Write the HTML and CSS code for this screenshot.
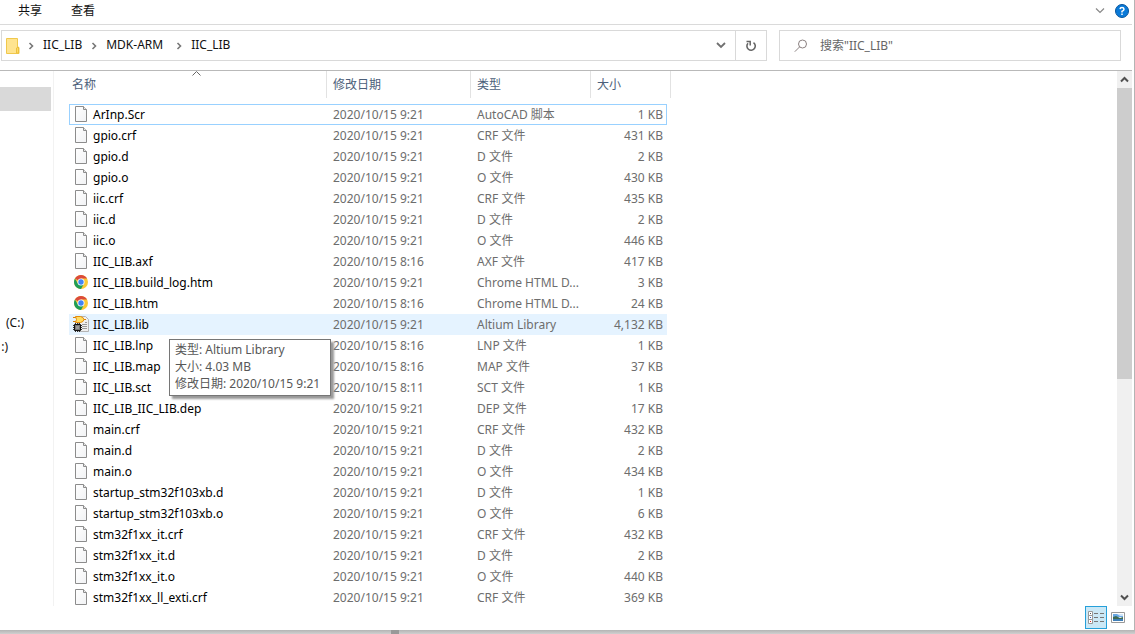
FILE: index.html
```html
<!DOCTYPE html>
<html lang="zh-CN">
<head>
<meta charset="utf-8">
<title>IIC_LIB</title>
<link rel="stylesheet" href="styles.css">
</head>
<body>
<svg class="defs" aria-hidden="true">
  <defs>
    <linearGradient id="paper" x1="0" y1="0" x2="1" y2="1"><stop offset="0" stop-color="#fff"/><stop offset="1" stop-color="#f1f2f4"/></linearGradient>
    <symbol id="file" viewBox="0 0 16 16">
      <path d="M2.500.5h8l3 3v12h-11z" fill="url(#paper)" stroke="#8c8c8c"/>
      <path d="M10.500.5v3h3" fill="#e8e8e8" stroke="#8c8c8c"/>
    </symbol>
    <symbol id="chrome" viewBox="0 0 16 16">
      <circle cx="8" cy="8" r="7" fill="#fbc934"/>
      <path d="M8 8 1.940 4.500A7 7 0 0 1 14.060 4.500H8z" fill="#db4a3c"/>
      <path d="M1.940 4.500A7 7 0 0 0 8 15l3-5.200L8 8 5 9.800z" fill="#1f9d58"/>
      <circle cx="8" cy="8" r="3.500" fill="#fff"/>
      <circle cx="8" cy="8" r="2.700" fill="#4285f4"/>
    </symbol>
    <symbol id="altium" viewBox="0 0 16 16">
      <path d="M5.500.5h7l3 3v12h-10z" fill="#f0f0f0" stroke="#b4b4b4"/>
      <path d="M9 8.500h5M9 10.500h5M9 12.500h5M12 6.500h2" stroke="#999"/>
      <path d="M0 1.500h3M0 5.500h3M10 3.500h3" stroke="#d98207"/>
      <path d="M2.500.5h5q3 .5 3.500 3-.5 2.500-3.500 3h-5l1-3z" fill="#ffdc62" stroke="#e58b0a"/>
      <path d="M2.500 7v9M4.500 7v9M6.500 7v9M0 9.500h9M0 11.500h9M0 13.500h9" stroke="#333"/>
      <path d="M1.500 8.500h6v6h-6z" fill="#777" stroke="#111"/>
      <path d="M3 10h3v3H3z" fill="#999"/>
    </symbol>
    <symbol id="crumb" viewBox="0 0 6 8"><path d="M1.500 1l3 3-3 3" fill="none" stroke="#777" stroke-width="1.600"/></symbol>
  </defs>
</svg>
<div class="window">
  <header class="ribbon">
    <nav class="tabs"><button>共享</button><button>查看</button></nav>
    <button class="icon-btn" aria-label="展开功能区"><svg width="10" height="6" viewBox="0 0 10 6"><path d="M1 .5l4 4 4-4" fill="none" stroke="#888" stroke-width="1.200"/></svg></button>
    <button class="icon-btn help" aria-label="帮助"><svg width="14" height="14" viewBox="0 0 14 14"><circle cx="7" cy="7" r="6.500" fill="#0a7ad8" stroke="#07549c"/><path d="M5 5.200Q5.200 3.500 7 3.500T9 5.200Q9 6.200 7 7.300V8.500M7 9.500v1.500" fill="none" stroke="#fff" stroke-width="1.500"/></svg></button>
  </header>
  <div class="toolbar">
    <div class="address">
      <svg class="folder" width="14" height="16" viewBox="0 0 14 16"><path d="M.5.5h11v9h1.500v6H.5z" fill="#ffe48f" stroke="#f0c84c"/><path d="M10.500 15v-5l2-1v6z" fill="#ffda68" stroke="#ecc03c"/></svg>
      <svg class="sep" width="6" height="8"><use href="#crumb"/></svg><button>IIC_LIB</button>
      <svg class="sep" width="6" height="8"><use href="#crumb"/></svg><button class="wide">MDK-ARM</button>
      <svg class="sep" width="6" height="8"><use href="#crumb"/></svg><button>IIC_LIB</button>
      <button class="history" aria-label="以前的位置"><svg width="10" height="7" viewBox="0 0 10 7"><path d="M1 1l4 4 4-4" fill="none" stroke="#707070" stroke-width="1.800"/></svg></button>
      <button class="refresh" aria-label="刷新"><svg width="12" height="12" viewBox="0 0 12 12"><path d="M8.500 2.600A4.200 4.200 0 1 1 3 3.200" fill="none" stroke="#666" stroke-width="1.600"/><path d="M1.500 1.500H5.200V5.500" fill="none" stroke="#666" stroke-width="1.500"/></svg></button>
    </div>
    <label class="search">
      <svg width="14" height="14" viewBox="0 0 14 14"><circle cx="8.500" cy="5" r="4" fill="none" stroke="#8a8080"/><path d="M5.700 7.800.8 12.700" stroke="#8a8080"/></svg>
      <input type="text" placeholder='搜索"IIC_LIB"' aria-label="搜索">
    </label>
  </div>
  <div class="content">
    <aside class="tree"><div class="selected"></div><div class="drive drive-c">(C:)</div><div class="drive drive-d">:)</div></aside>
    <main class="files">
      <table>
        <colgroup><col class="c-name"><col class="c-date"><col class="c-type"><col class="c-size"><col class="c-end"></colgroup>
        <thead><tr>
          <th><div class="head first">名称<svg class="sort" width="9" height="5" viewBox="0 0 9 5"><path d="M.5 4.500l4-4 4 4" fill="none" stroke="#666"/></svg></div></th>
          <th><div class="head">修改日期</div></th><th><div class="head">类型</div></th><th colspan="2"><div class="head last">大小</div></th>
        </tr></thead>
        <tbody>
          <tr class="focused"><td><svg><use href="#file"/></svg>ArInp.Scr</td><td>2020/10/15 9:21</td><td>AutoCAD 脚本</td><td>1 KB</td></tr>
          <tr><td><svg><use href="#file"/></svg>gpio.crf</td><td>2020/10/15 9:21</td><td>CRF 文件</td><td>431 KB</td></tr>
          <tr><td><svg><use href="#file"/></svg>gpio.d</td><td>2020/10/15 9:21</td><td>D 文件</td><td>2 KB</td></tr>
          <tr><td><svg><use href="#file"/></svg>gpio.o</td><td>2020/10/15 9:21</td><td>O 文件</td><td>430 KB</td></tr>
          <tr><td><svg><use href="#file"/></svg>iic.crf</td><td>2020/10/15 9:21</td><td>CRF 文件</td><td>435 KB</td></tr>
          <tr><td><svg><use href="#file"/></svg>iic.d</td><td>2020/10/15 9:21</td><td>D 文件</td><td>2 KB</td></tr>
          <tr><td><svg><use href="#file"/></svg>iic.o</td><td>2020/10/15 9:21</td><td>O 文件</td><td>446 KB</td></tr>
          <tr><td><svg><use href="#file"/></svg>IIC_LIB.axf</td><td>2020/10/15 8:16</td><td>AXF 文件</td><td>417 KB</td></tr>
          <tr><td><svg><use href="#chrome"/></svg>IIC_LIB.build_log.htm</td><td>2020/10/15 9:21</td><td>Chrome HTML D...</td><td>3 KB</td></tr>
          <tr><td><svg><use href="#chrome"/></svg>IIC_LIB.htm</td><td>2020/10/15 8:16</td><td>Chrome HTML D...</td><td>24 KB</td></tr>
          <tr class="hovered"><td><svg><use href="#altium"/></svg>IIC_LIB.lib<div class="tooltip" role="tooltip">类型: Altium Library<br>大小: 4.03 MB<br>修改日期: 2020/10/15 9:21</div></td><td>2020/10/15 9:21</td><td>Altium Library</td><td>4,132 KB</td></tr>
          <tr><td><svg><use href="#file"/></svg>IIC_LIB.lnp</td><td>2020/10/15 8:16</td><td>LNP 文件</td><td>1 KB</td></tr>
          <tr><td><svg><use href="#file"/></svg>IIC_LIB.map</td><td>2020/10/15 8:16</td><td>MAP 文件</td><td>37 KB</td></tr>
          <tr><td><svg><use href="#file"/></svg>IIC_LIB.sct</td><td>2020/10/15 8:11</td><td>SCT 文件</td><td>1 KB</td></tr>
          <tr><td><svg><use href="#file"/></svg>IIC_LIB_IIC_LIB.dep</td><td>2020/10/15 9:21</td><td>DEP 文件</td><td>17 KB</td></tr>
          <tr><td><svg><use href="#file"/></svg>main.crf</td><td>2020/10/15 9:21</td><td>CRF 文件</td><td>432 KB</td></tr>
          <tr><td><svg><use href="#file"/></svg>main.d</td><td>2020/10/15 9:21</td><td>D 文件</td><td>2 KB</td></tr>
          <tr><td><svg><use href="#file"/></svg>main.o</td><td>2020/10/15 9:21</td><td>O 文件</td><td>434 KB</td></tr>
          <tr><td><svg><use href="#file"/></svg>startup_stm32f103xb.d</td><td>2020/10/15 9:21</td><td>D 文件</td><td>1 KB</td></tr>
          <tr><td><svg><use href="#file"/></svg>startup_stm32f103xb.o</td><td>2020/10/15 9:21</td><td>O 文件</td><td>6 KB</td></tr>
          <tr><td><svg><use href="#file"/></svg>stm32f1xx_it.crf</td><td>2020/10/15 9:21</td><td>CRF 文件</td><td>432 KB</td></tr>
          <tr><td><svg><use href="#file"/></svg>stm32f1xx_it.d</td><td>2020/10/15 9:21</td><td>D 文件</td><td>2 KB</td></tr>
          <tr><td><svg><use href="#file"/></svg>stm32f1xx_it.o</td><td>2020/10/15 9:21</td><td>O 文件</td><td>440 KB</td></tr>
          <tr><td><svg><use href="#file"/></svg>stm32f1xx_ll_exti.crf</td><td>2020/10/15 9:21</td><td>CRF 文件</td><td>369 KB</td></tr>
        </tbody>
      </table>
    </main>
    <div class="scrollbar">
      <button aria-label="向上滚动"><svg width="9" height="7" viewBox="0 0 9 7"><path d="M1 5.500 4.500 2 8 5.500" fill="none" stroke="#505050" stroke-width="2"/></svg></button>
      <div class="track"><div class="thumb"></div></div>
      <button aria-label="向下滚动"><svg width="9" height="7" viewBox="0 0 9 7"><path d="M1 1.500 4.500 5 8 1.500" fill="none" stroke="#505050" stroke-width="2"/></svg></button>
    </div>
  </div>
  <footer class="status">
    <button class="view active" aria-label="详细信息"><svg width="18" height="14" viewBox="0 0 18 14"><path d="M1.500.5h4v4h-4zM1.500 4.500h4v4h-4zM1.500 8.500h4v4h-4z" fill="#fff" stroke="#999"/><path d="M7 2.500h4M13 2.500h4M7 6.500h4M13 6.500h4M7 10.500h4M13 10.500h4" stroke="#777"/><path d="M3 2h1v1H3z" fill="#555"/><path d="M3 6h1v1H3z" fill="#36c"/><path d="M3 10h1v1H3z" fill="#d22"/></svg></button>
    <button class="view" aria-label="大缩略图"><svg width="14" height="11" viewBox="0 0 14 11"><path d="M.5.5h13v10H.5z" fill="#fff" stroke="#999"/><path d="M2 2h10v3H2z" fill="#6aa8e4"/><path d="M6 2h6v2H9z" fill="#cfe5f8"/><path d="M2 5l3-1 4 2 3-1v2H2z" fill="#3e6b54"/><path d="M2 7h10v2H2z" fill="#3f7fb8"/></svg></button>
  </footer>
</div>
<div class="shadow"><span></span></div>
</body>
</html>
```
FILE: styles.css
```css
* { box-sizing: border-box; }
body {
  margin: 0;
  height: 100vh;
  display: flex;
  flex-direction: column;
  overflow: hidden;
  background: #fff;
  color: #111;
  font: 12px/20px "Noto Sans", "Noto Sans CJK SC", sans-serif;
}
button { margin: 0; padding: 0; border: 0; background: none; font: inherit; color: inherit; }
svg { display: block; flex: none; }
.defs { position: absolute; width: 0; height: 0; }
.window { flex: 1; min-height: 0; display: flex; flex-direction: column; border-right: 1px solid #b4b4b4; }
.ribbon { height: 25px; display: flex; align-items: center; border-bottom: 1px solid #dadada; padding: 0 3px 2px 18px; margin-right: 2px; }
.tabs { flex: 1; display: flex; gap: 29px; }
.icon-btn + .icon-btn { margin-left: 10px; }
.toolbar { display: flex; gap: 12px; height: 46px; padding: 5px 11px 9px 1px; border-bottom: 1px solid #b9b9b9; margin-right: 2px; }
.address { flex: 1; display: flex; align-items: center; border: 1px solid #d9d9d9; padding-left: 4px; }
.address > button { padding-bottom: 2px; }
.address > .wide { min-width: 61px; text-align: left; }
.sep { margin: 0 9px; }
.folder + .sep { margin-left: 8px; }
.address > .history { margin-left: auto; width: 29px; display: grid; place-items: center; padding: 0; }
.address > .refresh { align-self: stretch; width: 31px; display: grid; place-items: center; border-left: 1px solid #d9d9d9; padding: 0; }
.search { width: 342px; display: flex; align-items: center; gap: 12px; padding-left: 14px; border: 1px solid #d9d9d9; }
.search input { flex: 1; min-width: 0; border: 0; padding: 0; outline: 0; font: inherit; background: none; }
.search input::placeholder { color: #666; opacity: 1; }
.content { flex: 1; min-height: 0; display: flex; }
.tree { width: 54px; border-right: 1px solid #f2f2f2; padding-top: 16px; overflow: hidden; }
.selected { width: 51px; height: 24px; background: #d9d9d9; }
.drive { display: flex; justify-content: flex-end; height: 24px; line-height: 24px; }
.drive-c { width: 24px; margin-top: 200px; }
.drive-d { width: 8px; }
.files { flex: 1; min-width: 0; padding-left: 15px; overflow: hidden; }
table { table-layout: fixed; width: 602px; border-collapse: separate; border-spacing: 0; }
.c-name { width: 257px; }
.c-date { width: 144px; }
.c-type { width: 120px; }
.c-size { width: 77px; }
.c-end { width: 4px; }
th { padding: 0 0 6px; text-align: left; font-weight: normal; color: #4c607a; }
.head { height: 27px; line-height: 27px; border-left: 1px solid #e2e2e2; padding-left: 6px; }
.first { position: relative; border: 0; padding-left: 3px; }
.last { border-right: 1px solid #e2e2e2; }
.sort { position: absolute; top: 0; left: 123px; }
td { height: 21px; padding: 0 0 0 7px; line-height: 19px; color: #6d6d6d; white-space: nowrap; border: solid transparent; border-width: 1px 0; }
td:first-child { display: flex; align-items: flex-start; gap: 4px; padding-left: 3px; border-left-width: 1px; color: #000; position: relative; }
td:nth-child(4) { text-align: right; padding: 0 3px 0 0; border-right-width: 1px; }
td > svg { width: 16px; height: 16px; margin-top: 1px; }
.focused td { border-color: #99d1ff; }
.hovered td { background: #e5f3ff; border-color: #e5f3ff; }
.tooltip { position: absolute; z-index: 1; left: 99px; top: 24px; min-width: 162px; padding: 1px 5px 3px; line-height: 17px; color: #575757; background: #fff; border: 1px solid #767676; box-shadow: 3px 3px 2px #999; }
.scrollbar { width: 15px; margin-right: 2px; display: flex; flex-direction: column; background: #f0f0f0; }
.scrollbar button { height: 17px; display: grid; place-items: center; }
.track { flex: 1; }
.thumb { height: 58%; background: #cdcdcd; }
.status { height: 24px; display: flex; justify-content: flex-end; padding: 0 9px 1px 0; gap: 4px; }
.view { display: grid; place-items: center; }
.active { width: 22px; border: 1px solid #26a0da; background: #cbe8f6; }
.shadow { height: 4px; background: linear-gradient(#b4b4b4, #d0d0d0); }
.shadow span { display: block; width: 8px; height: 4px; margin-left: 391px; background: #999; }
```
